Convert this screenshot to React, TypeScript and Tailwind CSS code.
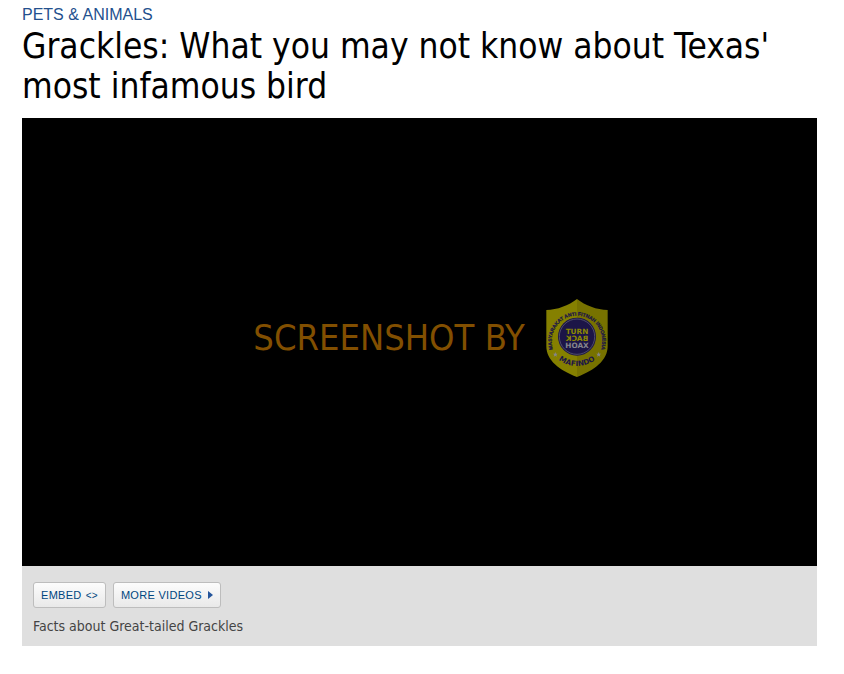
const sans = "font-['DejaVu_Sans_Condensed','Noto_Sans',sans-serif]";

function ShieldLogo() {
  return (
    <svg className="h-[78px] w-[62px] shrink-0" viewBox="0 0 186 234" role="img" aria-label="Turn Back Hoax, Mafindo">
      <defs>
        <path id="ring-top" d="M25 164 C-2 96 46 50 93 50 S188 96 161 164" />
        <path id="ring-bottom" d="M20 165 A92 92 0 0 0 166 165" />
      </defs>
      <path d="M93 0 C68 20 34 32 1 33 V142 C1 184 40 214 93 234 Z" fill="#858000" />
      <path d="M93 0 C118 20 152 32 185 33 V142 C185 184 146 214 93 234 Z" fill="#777200" />
      <circle cx="93" cy="113" r="57" fill="#1c1547" />
      <circle cx="93" cy="113" r="53" fill="none" stroke="#66667c" strokeWidth="2" />
      <g fill="#1c1547" fontFamily="Liberation Sans, sans-serif" fontWeight="700">
        <text fontSize="15" textAnchor="middle" stroke="#1c1547" strokeWidth="0.8">
          <textPath href="#ring-top" startOffset="50%">MASYARAKAT ANTI FITNAH INDONESIA</textPath>
        </text>
        <text fontSize="22" textAnchor="middle" fontFamily="DejaVu Sans, sans-serif">
          <textPath href="#ring-bottom" startOffset="50%">MAFINDO</textPath>
        </text>
      </g>
      <g fontFamily="DejaVu Sans, sans-serif" fontWeight="700" fontSize="22" textAnchor="middle">
        <text x="93" y="105" fill="#8d8900">TURN</text>
        <text x="-93" y="126" fill="#8d8900" transform="scale(-1 1)">BACK</text>
        <text x="93" y="147" fill="#85858c">HOAX</text>
      </g>
      <g fill="#85858c">
        <path d="M28 159 l2 5 5 0 -4 4 2 5 -5 -3 -5 3 2 -5 -4 -4 5 0z" />
        <path d="M158 159 l2 5 5 0 -4 4 2 5 -5 -3 -5 3 2 -5 -4 -4 5 0z" />
      </g>
    </svg>
  );
}

const button =
  "flex h-[26px] items-center rounded-[3px] border border-[#bdbdbd] bg-linear-to-b from-[#fcfcfc] to-[#e9e9e9] px-[7px] text-[11px] tracking-[0.3px] text-[#00467f]";

export default function App() {
  return (
    <main className="min-h-screen bg-white pr-[27px] pb-7 pl-[22px] pt-[5px]">
      <a href="#pets" className="block font-['Liberation_Sans',Arial,sans-serif] text-base leading-5 text-[#23508e]">
        PETS &amp; ANIMALS
      </a>
      <h1 className={`${sans} mt-px text-[35px] leading-10 text-black`}>
        Grackles: What you may not know about Texas' most infamous bird
      </h1>
      <figure className="mt-3">
        <div className="flex h-[448px] items-center justify-center gap-[21px] bg-black pb-2 pl-[22px]">
          <span className={`${sans} whitespace-nowrap text-4xl text-[#824f00]`}>SCREENSHOT BY</span>
          <ShieldLogo />
        </div>
        <div className="bg-[#dfdfdf] px-[11px] pt-4 pb-2.5">
          <div className="flex gap-[7px] font-['Liberation_Sans',Arial,sans-serif]">
            <button type="button" className={`${button} gap-1`}>
              EMBED <span className="text-[10px]">&lt;&gt;</span>
            </button>
            <button type="button" className={`${button} gap-1.5`}>
              MORE VIDEOS
              <svg className="h-2 w-[5px]" viewBox="0 0 5 8" aria-hidden="true">
                <path d="M0 0 5 4 0 8Z" fill="#24559b" />
              </svg>
            </button>
          </div>
          <figcaption className={`${sans} mt-2 text-sm leading-5 text-[#444]`}>Facts about Great-tailed Grackles</figcaption>
        </div>
      </figure>
    </main>
  );
}
